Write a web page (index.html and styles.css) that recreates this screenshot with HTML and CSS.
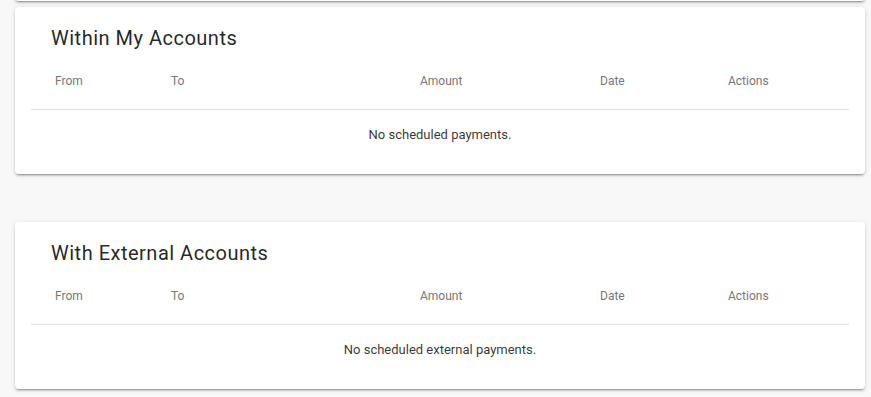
FILE: index.html
```html
<!DOCTYPE html>
<html lang="en">
<head>
<meta charset="utf-8">
<title>Scheduled Payments</title>
<link rel="stylesheet" href="styles.css">
</head>
<body>
<div class="page">
  <div class="card prev-card"></div>

  <section class="card">
    <h2 class="card-title">Within My Accounts</h2>
    <div class="table">
      <div class="row head">
        <div class="cell">From</div>
        <div class="cell">To</div>
        <div class="cell">Amount</div>
        <div class="cell">Date</div>
        <div class="cell">Actions</div>
      </div>
      <div class="empty">No scheduled payments.</div>
    </div>
  </section>

  <section class="card">
    <h2 class="card-title">With External Accounts</h2>
    <div class="table">
      <div class="row head">
        <div class="cell">From</div>
        <div class="cell">To</div>
        <div class="cell">Amount</div>
        <div class="cell">Date</div>
        <div class="cell">Actions</div>
      </div>
      <div class="empty">No scheduled external payments.</div>
    </div>
  </section>
</div>
</body>
</html>
```

FILE: styles.css
```css
html, body {
  margin: 0;
  padding: 0;
  background: #f8f8f8;
  font-family: Roboto, "Liberation Sans", Arial, sans-serif;
  overflow: hidden;
}

.page {
  display: flex;
  flex-direction: column;
  gap: 48px;
  padding: 0 6px 20px 15px;
}

.card {
  background: #fff;
  border-radius: 4px;
  box-shadow: 0 3px 1px -2px rgba(0,0,0,.2), 0 2px 2px 0 rgba(0,0,0,.14), 0 1px 5px 0 rgba(0,0,0,.12);
  padding: 16px;
}

.prev-card {
  height: 60px;
  margin-top: -91px;
  margin-bottom: -42px;
}

.card-title {
  margin: 0 0 0 20px;
  font-size: 20px;
  font-weight: 400;
  line-height: 31px;
  color: rgba(0,0,0,.87);
  letter-spacing: 0.5px;
}

.row {
  display: grid;
  grid-template-columns: 116px 249px 180px 128px 1fr;
}

.head {
  height: 55px;
  align-items: center;
  border-bottom: 1px solid #e0e0e0;
}

.head .cell {
  padding-left: 24px;
  font-size: 12px;
  color: #777;
  padding-bottom: 1px;
}

.empty {
  height: 48px;
  display: flex;
  align-items: center;
  justify-content: center;
  font-size: 13px;
  color: rgba(0,0,0,.8);
}
```
